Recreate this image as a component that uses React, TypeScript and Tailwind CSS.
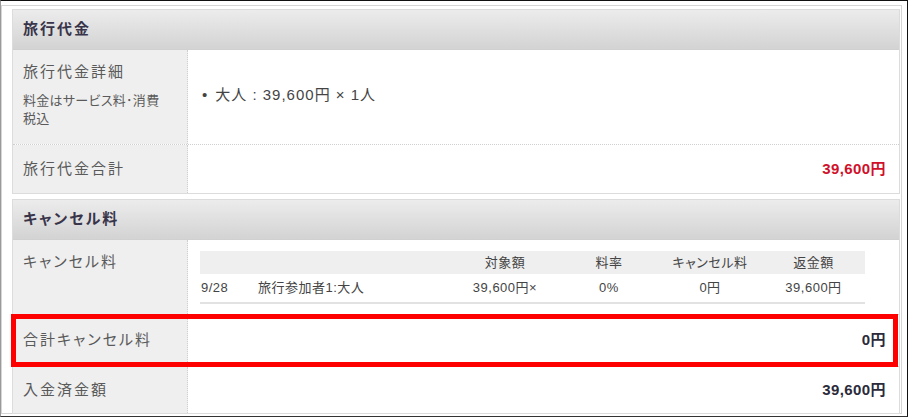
import React from "react";

const font =
  "font-[family-name:'Liberation_Sans','Noto_Sans_CJK_JP',sans-serif] [font-feature-settings:'palt']";

function Header({ title }: { title: string }) {
  return (
    <div className="h-[40px] flex items-center pl-[10px] bg-gradient-to-b from-[#ececec] to-[#d3d3d3] border-b border-[#d0d0d0]">
      <span className="text-[15px] font-bold tracking-[2px] text-[#38344a]">{title}</span>
    </div>
  );
}

function Row({
  label,
  h,
  children,
  last,
  labelTop,
}: {
  label: React.ReactNode;
  h: string;
  children?: React.ReactNode;
  last?: boolean;
  labelTop?: boolean;
}) {
  return (
    <div className={`flex ${h} ${last ? "" : "border-b border-dotted border-[#cfcfcf]"}`}>
      <div
        className={`w-[175px] shrink-0 bg-[#efefef] border-r border-dotted border-[#cfcfcf] pl-[10px] flex ${
          labelTop ? "items-start pt-[10px]" : "items-center"
        }`}
      >
        {label}
      </div>
      <div className="flex-1 bg-white">{children}</div>
    </div>
  );
}

const labelCls = "text-[15px] tracking-[2px] text-[#5a5a5a]";

function Total({ value, red }: { value: string; red?: boolean }) {
  return (
    <div className="h-full flex items-center justify-end pr-[13px]">
      <span
        className={`text-[15px] font-bold tracking-[0.4px] ${red ? "text-[#d0102a]" : "text-[#2a2a3a]"}`}
      >
        {value}
      </span>
    </div>
  );
}

export default function App() {
  return (
    <div className={`${font} w-[908px] h-[417px] bg-white border-t border-r border-b border-t-[#111] border-r-[#111] border-b-[#333] border-l border-l-[#9a9a9a]`}>
      <div className="mt-[4px] mr-[5px] h-[409px] border border-[#d6d6d6] pl-[10px] pr-[1px] pt-[3px]">
        {/* Panel 1 */}
        <div className="border border-[#dcdcdc]">
          <Header title="旅行代金" />
          <Row
            h="h-[95px]"
            labelTop
            label={
              <div className="flex flex-col">
                <span className={`${labelCls} leading-[20px] pt-[2px]`}>旅行代金詳細</span>
                <span className="text-[13px] tracking-[0.3px] text-[#5a5a5a] leading-[18px] mt-[10px]">
                  料金はサービス料･消費
                  <br />
                  税込
                </span>
              </div>
            }
          >
            <div className="h-full flex items-center pl-[14px] pb-[4px]">
              <span className="text-[15px] text-[#444] tracking-[1px]">
                <span className="mr-[7px]">•</span>大人 : 39,600円 × 1人
              </span>
            </div>
          </Row>
          <Row h="h-[48px]" last label={<span className={labelCls}>旅行代金合計</span>}>
            <Total value="39,600円" red />
          </Row>
        </div>

        {/* Panel 2 */}
        <div className="relative mt-[5px] border border-[#dcdcdc]">
          <Header title="キャンセル料" />
          <Row
            h="h-[75px]"
            labelTop
            label={<span className={`${labelCls} pt-[1px]`}>キャンセル料</span>}
          >
            <div className="pl-[12px] pt-[11px] w-[677px]">
              <div className="grid grid-cols-[56px_194px_110px_98px_104px_103px] text-[13px] text-[#444] tracking-[0.5px]">
                <div className="contents">
                  <div className="bg-[#efefef] h-[23px]" />
                  <div className="bg-[#efefef] h-[23px]" />
                  <div className="bg-[#efefef] h-[23px] flex items-center justify-center">対象額</div>
                  <div className="bg-[#efefef] h-[23px] flex items-center justify-center">料率</div>
                  <div className="bg-[#efefef] h-[23px] flex items-center justify-center">キャンセル料</div>
                  <div className="bg-[#efefef] h-[23px] flex items-center justify-center">返金額</div>
                </div>
                <div className="contents">
                  <div className="h-[30px] flex items-center pl-[1px] border-b-2 border-[#e2e2e2]">9/28</div>
                  <div className="h-[30px] flex items-center pl-[2px] border-b-2 border-[#e2e2e2]">旅行参加者1:大人</div>
                  <div className="h-[30px] flex items-center justify-center border-b-2 border-[#e2e2e2]">39,600円×</div>
                  <div className="h-[30px] flex items-center justify-center border-b-2 border-[#e2e2e2]">0%</div>
                  <div className="h-[30px] flex items-center justify-center border-b-2 border-[#e2e2e2]">0円</div>
                  <div className="h-[30px] flex items-center justify-center border-b-2 border-[#e2e2e2]">39,600円</div>
                </div>
              </div>
            </div>
          </Row>
          <Row h="h-[52px]" label={<span className={labelCls}>合計キャンセル料</span>}>
            <Total value="0円" />
          </Row>
          <Row h="h-[46px]" last label={<span className={labelCls}>入金済金額</span>}>
            <Total value="39,600円" />
          </Row>
          <div className="absolute left-[-2px] top-[114px] w-[887px] h-[53px] border-[5px] border-[#ff0000] pointer-events-none" />
        </div>
      </div>
    </div>
  );
}
